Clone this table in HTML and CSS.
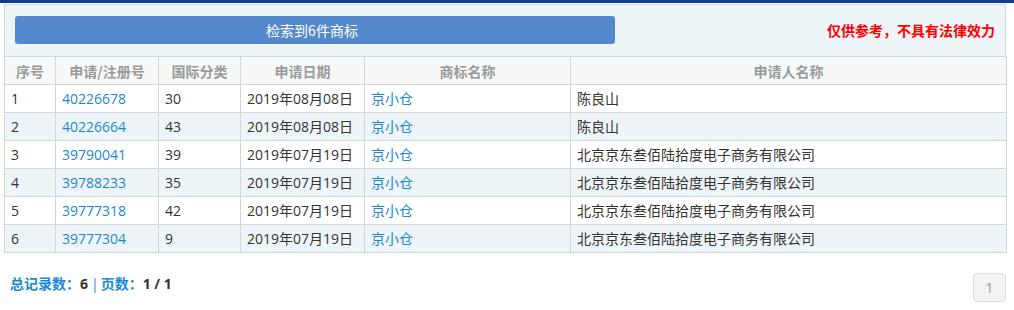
FILE: index.html
```html
<!DOCTYPE html>
<html lang="zh-CN">
<head>
<meta charset="utf-8">
<title>商标检索结果</title>
<link rel="stylesheet" href="styles.css">
</head>
<body>
<div class="topbar"></div>
<div class="wrap">
  <div class="panel">
    <div class="btn">检索到6件商标</div>
    <div class="notice">仅供参考，不具有法律效力</div>
  </div>
  <table class="grid">
    <colgroup>
      <col class="c1"><col class="c2"><col class="c3"><col class="c4"><col class="c5"><col class="c6">
    </colgroup>
    <thead>
      <tr><th>序号</th><th>申请/注册号</th><th>国际分类</th><th>申请日期</th><th>商标名称</th><th>申请人名称</th></tr>
    </thead>
    <tbody>
      <tr><td>1</td><td><a class="lnk">40226678</a></td><td>30</td><td>2019年08月08日</td><td><a class="lnk">京小仓</a></td><td>陈良山</td></tr>
      <tr class="alt"><td>2</td><td><a class="lnk">40226664</a></td><td>43</td><td>2019年08月08日</td><td><a class="lnk">京小仓</a></td><td>陈良山</td></tr>
      <tr><td>3</td><td><a class="lnk">39790041</a></td><td>39</td><td>2019年07月19日</td><td><a class="lnk">京小仓</a></td><td>北京京东叁佰陆拾度电子商务有限公司</td></tr>
      <tr class="alt"><td>4</td><td><a class="lnk">39788233</a></td><td>35</td><td>2019年07月19日</td><td><a class="lnk">京小仓</a></td><td>北京京东叁佰陆拾度电子商务有限公司</td></tr>
      <tr><td>5</td><td><a class="lnk">39777318</a></td><td>42</td><td>2019年07月19日</td><td><a class="lnk">京小仓</a></td><td>北京京东叁佰陆拾度电子商务有限公司</td></tr>
      <tr class="alt"><td>6</td><td><a class="lnk">39777304</a></td><td>9</td><td>2019年07月19日</td><td><a class="lnk">京小仓</a></td><td>北京京东叁佰陆拾度电子商务有限公司</td></tr>
    </tbody>
  </table>
  <div class="footer">
    <div class="summary"><span class="lbl">总记录数：</span><span class="val">6</span><span class="sep">|</span><span class="lbl">页数：</span><span class="val">1 / 1</span></div>
    <div class="pager">1</div>
  </div>
</div>
</body>
</html>
```
FILE: styles.css
```css
* { box-sizing: border-box; }
html, body { margin: 0; padding: 0; background: #fff; }
body {
  font-family: "Open Sans", "Noto Sans CJK SC", sans-serif;
  font-size: 14px;
  color: #333;
}
.topbar { height: 3px; background: #0d3f8f; }
.wrap { width: 1002px; margin: 1px 0 0 4px; }
.panel {
  height: 52px;
  border: 1px solid #d4d4d4;
  border-bottom: none;
  background: #eef5f9;
  display: flex;
  align-items: center;
  justify-content: space-between;
  padding: 0 10px 1px 10px;
}
.btn {
  width: 600px;
  height: 28px;
  line-height: 28px;
  padding-right: 6px;
  background: #5589cd;
  color: #fff;
  border-radius: 3px;
  text-align: center;
  font-family: "Noto Sans CJK SC", sans-serif;
  font-size: 14px;
}
.notice {
  color: #f00;
  font-weight: bold;
  font-family: "Noto Sans CJK SC", sans-serif;
  font-size: 14px;
}
.grid {
  width: 1002px;
  border-collapse: collapse;
  table-layout: fixed;
}
.c1 { width: 51px; }
.c2 { width: 103px; }
.c3 { width: 82px; }
.c4 { width: 124px; }
.c5 { width: 206px; }
.c6 { width: 436px; }
.grid th, .grid td {
  border: 1px solid #d4d4d4;
  height: 28px;
  padding: 0 6px;
  line-height: 20px;
  white-space: nowrap;
  text-align: left;
}
.grid th {
  background: #f7f9f9;
  color: #999;
  font-weight: bold;
  text-align: center;
  font-family: "Noto Sans CJK SC", sans-serif;
}
.grid tr.alt td { background: #eef5f9; }
.lnk { color: #1a88d6; text-decoration: none; }
.footer {
  margin-top: 20px;
  display: flex;
  justify-content: space-between;
  align-items: flex-start;
}
.summary {
  padding: 1px 0 0 6px;
  line-height: 20px;
  font-weight: bold;
}
.summary .lbl { color: #1a88d6; }
.summary .sep { color: #1a88d6; font-weight: normal; margin: 0 2px 0 3px; }
.summary .val { color: #333; }
.pager {
  width: 33px;
  height: 29px;
  line-height: 27px;
  border: 1px solid #ddd;
  border-radius: 4px;
  background: #f4f4f4;
  color: #999;
  text-align: center;
}
```
